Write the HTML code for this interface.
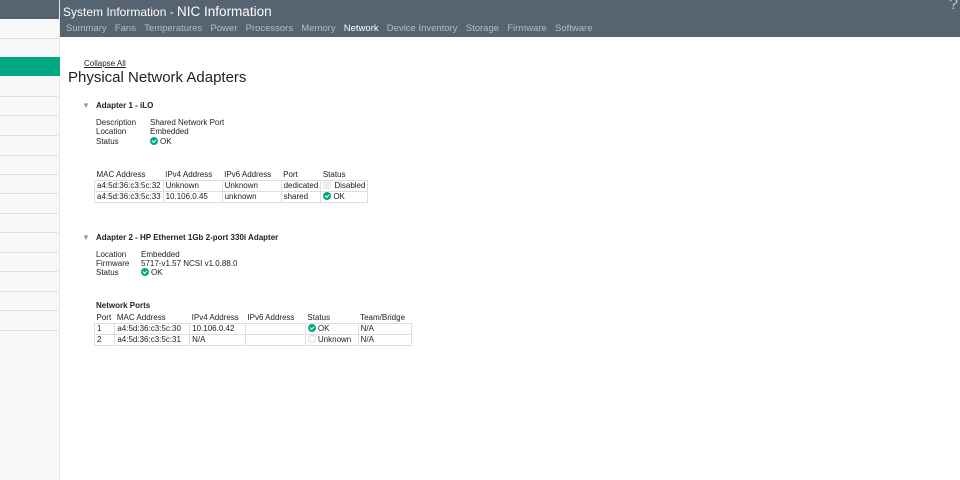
<!DOCTYPE html>
<html><head><style>
*{margin:0;padding:0;box-sizing:border-box}
body{width:960px;height:480px;overflow:hidden;background:#fff;font-family:"Liberation Sans",sans-serif;color:#222;position:relative}
.side{position:absolute;left:0;top:0;width:60px;height:480px;background:#f8f8f8;border-right:1px solid #e6e6e6}
.side .top{height:19px;background:#566370}
.side .ln{position:absolute;left:0;width:58px;height:1px;background:#e0e0e0}
.side .g{position:absolute;left:0;top:57px;width:60px;height:19px;background:#01a982}
.hdr{position:absolute;left:60px;top:0;width:900px;height:37px;background:#566370}
.title{position:absolute;left:3px;top:4px;color:#fff;font-size:12px}
.title b{font-weight:normal;font-size:13.5px}
.tabs{position:absolute;left:6px;top:23px;font-size:9.5px;color:#b4bcc4;white-space:nowrap}
.tabs span{margin-right:8.2px}
.tabs .a{color:#fff}
.q{position:absolute;right:2px;top:-4px;color:#c0c6cc;font-size:16px}
.t{position:absolute;font-size:8px;white-space:nowrap}
.h{font-weight:bold}
table{position:absolute;border-collapse:collapse;font-size:8px}
td{border:1px solid #ddd;padding:0 2px;height:11px;white-space:nowrap}
tr.th td{border:none;border-bottom:1px solid #ddd}
.ok{display:inline-block;width:8px;height:8px;border-radius:50%;background:#01a982;vertical-align:-1px;margin-right:2px;position:relative}
.ok:after{content:"";position:absolute;left:2px;top:1.5px;width:3px;height:2px;border-left:1.3px solid #fff;border-bottom:1.3px solid #fff;transform:rotate(-45deg)}
.uk{display:inline-block;width:8px;height:8px;border-radius:50%;border:1px solid #ddd;vertical-align:-1px;margin-right:2px}
.dis{display:inline-block;width:8px;height:8px;background:#eee;vertical-align:-1px;margin-right:3px}
.tri{position:absolute;font-size:8px;color:#999}
</style></head><body>
<div class="side"><div class="top"></div>
<div class="ln" style="top:38px"></div><div class="g"></div>
<div class="ln" style="top:96px"></div><div class="ln" style="top:115px"></div><div class="ln" style="top:135px"></div><div class="ln" style="top:155px"></div><div class="ln" style="top:174px"></div><div class="ln" style="top:193px"></div><div class="ln" style="top:213px"></div><div class="ln" style="top:232px"></div><div class="ln" style="top:252px"></div><div class="ln" style="top:271px"></div><div class="ln" style="top:291px"></div><div class="ln" style="top:310px"></div><div class="ln" style="top:330px"></div>
</div>
<div class="hdr"><div class="title">System Information - <b>NIC Information</b></div>
<div class="tabs"><span>Summary</span><span>Fans</span><span>Temperatures</span><span>Power</span><span>Processors</span><span>Memory</span><span class="a">Network</span><span>Device Inventory</span><span>Storage</span><span>Firmware</span><span>Software</span></div>
<div class="q">?</div></div>
<div class="t" style="left:84px;top:59px;text-decoration:underline">Collapse All</div>
<div class="t" style="left:68px;top:69px;font-size:15px">Physical Network Adapters</div>
<div class="tri" style="left:82px;top:101px">▼</div>
<div class="t h" style="left:96px;top:101px">Adapter 1 - iLO</div>
<div class="t" style="left:96px;top:118px">Description</div><div class="t" style="left:150px;top:118px">Shared Network Port</div>
<div class="t" style="left:96px;top:127px">Location</div><div class="t" style="left:150px;top:127px">Embedded</div>
<div class="t" style="left:96px;top:137px">Status</div><div class="t" style="left:150px;top:137px"><span class="ok"></span>OK</div>
<table style="left:94px;top:169px">
<tr class="th"><td>MAC Address</td><td>IPv4 Address</td><td>IPv6 Address</td><td>Port</td><td>Status</td></tr>
<tr><td>a4:5d:36:c3:5c:32</td><td>Unknown</td><td>Unknown</td><td>dedicated</td><td><span class="dis"></span>Disabled</td></tr>
<tr><td>a4:5d:36:c3:5c:33</td><td style="width:59px">10.106.0.45</td><td style="width:59px">unknown</td><td>shared</td><td><span class="ok"></span>OK</td></tr>
</table>
<div class="tri" style="left:82px;top:233px">▼</div>
<div class="t h" style="left:96px;top:233px">Adapter 2 - HP Ethernet 1Gb 2-port 330i Adapter</div>
<div class="t" style="left:96px;top:250px">Location</div><div class="t" style="left:141px;top:250px">Embedded</div>
<div class="t" style="left:96px;top:259px">Firmware</div><div class="t" style="left:141px;top:259px">5717-v1.57 NCSI v1.0.88.0</div>
<div class="t" style="left:96px;top:268px">Status</div><div class="t" style="left:141px;top:268px"><span class="ok"></span>OK</div>
<div class="t h" style="left:96px;top:301px">Network Ports</div>
<table style="left:94px;top:312px;width:318px">
<tr class="th"><td>Port</td><td>MAC Address</td><td>IPv4 Address</td><td>IPv6 Address</td><td>Status</td><td>Team/Bridge</td></tr>
<tr><td>1</td><td>a4:5d:36:c3:5c:30</td><td>10.106.0.42</td><td style="width:60px"></td><td><span class="ok"></span>OK</td><td>N/A</td></tr>
<tr><td>2</td><td>a4:5d:36:c3:5c:31</td><td>N/A</td><td></td><td><span class="uk"></span>Unknown</td><td>N/A</td></tr>
</table>
</body></html>
